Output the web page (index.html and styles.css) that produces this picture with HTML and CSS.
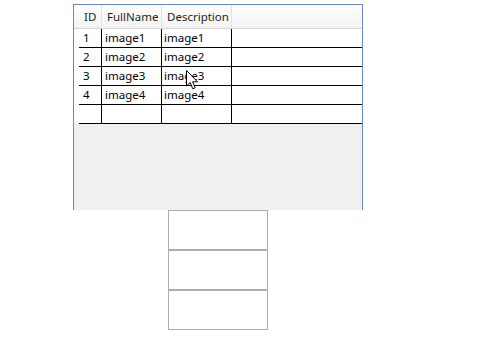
FILE: index.html
```html
<!DOCTYPE html>
<html lang="en">
<head>
    <meta charset="UTF-8">
    <title>Image list</title>
    <link rel="stylesheet" href="styles.css">
</head>
<body>

    <div class="window">
        <div class="grid">
            <div class="grid-header">
                <div class="row-head"></div>
                <div class="hcell col-id">ID</div>
                <div class="hcell col-name">FullName</div>
                <div class="hcell col-desc">Description</div>
                <div class="hcell col-fill"></div>
            </div>
            <div class="grid-row">
                <div class="row-head"></div>
                <div class="cell col-id">1</div>
                <div class="cell col-name">image1</div>
                <div class="cell col-desc">image1</div>
                <div class="cell col-fill"></div>
            </div>
            <div class="grid-row">
                <div class="row-head"></div>
                <div class="cell col-id">2</div>
                <div class="cell col-name">image2</div>
                <div class="cell col-desc">image2</div>
                <div class="cell col-fill"></div>
            </div>
            <div class="grid-row">
                <div class="row-head"></div>
                <div class="cell col-id">3</div>
                <div class="cell col-name">image3</div>
                <div class="cell col-desc">image3</div>
                <div class="cell col-fill"></div>
            </div>
            <div class="grid-row">
                <div class="row-head"></div>
                <div class="cell col-id">4</div>
                <div class="cell col-name">image4</div>
                <div class="cell col-desc">image4</div>
                <div class="cell col-fill"></div>
            </div>
            <div class="grid-row">
                <div class="row-head"></div>
                <div class="cell col-id"></div>
                <div class="cell col-name"></div>
                <div class="cell col-desc"></div>
                <div class="cell col-fill"></div>
            </div>
        </div>

        <div class="stack">
            <div class="slot"></div>
            <div class="slot"></div>
            <div class="slot"></div>
        </div>
    </div>

    <!-- mouse pointer over the third row -->
    <svg class="pointer" width="14" height="21" viewBox="0 0 14 21">
        <path d="M0.5 0.5 L0.5 16 L4.2 12.6 L6.8 18.8 L9.2 17.8 L6.6 11.8 L11.5 11.8 Z" fill="#fff" stroke="#000" stroke-width="1"/>
    </svg>

</body>
</html>
```

FILE: styles.css
```css
body {
    margin: 0;
    background-color: #fff;
    font-family: "Segoe UI", "Noto Sans", sans-serif;
    font-size: 11.5px;
    color: #000;
}
.window {
    width: 290px;
    margin: 4px 0 0 73px;
}
.grid {
    height: 205px;
    border: 1px solid #6a8bb5;
    border-bottom: none;
    background-color: #f0f0f0;
}
.grid-header {
    display: flex;
    height: 23px;
    border-bottom: 1px solid #d5d5d5;
    background: linear-gradient(to bottom, #fdfdfd, #f3f3f3);
    color: #1e1e1e;
}
.grid-row {
    display: flex;
    height: 18px;
    border-bottom: 1px solid #000;
    background-color: #fff;
}
.row-head {
    width: 5px;
    flex: none;
    background-color: #fff;
}
.grid-header .row-head {
    background: transparent;
}
.grid-row .row-head {
    margin-bottom: -1px;
    border-bottom: 1px solid #f0f0f0;
}
.hcell {
    line-height: 23px;
    padding-left: 5px;
    border-right: 1px solid #e3e3e3;
    box-sizing: border-box;
}
.cell {
    line-height: 18px;
    padding-left: 3px;
    border-right: 1px solid #000;
    box-sizing: border-box;
}
.col-id {
    width: 23px;
    padding-left: 5px;
}
.cell.col-id {
    padding-left: 4px;
}
.col-name {
    width: 60px;
}
.col-desc {
    width: 70px;
    padding-left: 5px;
}
.cell.col-desc {
    padding-left: 2px;
}
.col-fill {
    flex: 1;
    border-right: none;
}
.stack {
    width: 100px;
    margin: 0 auto;
}
.slot {
    height: 38px;
    border: 1px solid #adadad;
    background-color: #fff;
}
.pointer {
    position: absolute;
    left: 186px;
    top: 70px;
}
```
